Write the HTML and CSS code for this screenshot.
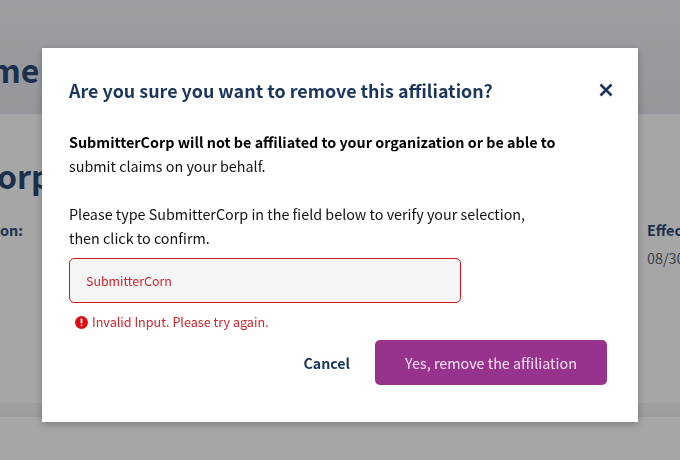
FILE: index.html
```html
<!DOCTYPE html>
<html lang="en">
<head>
    <meta charset="UTF-8">
    <meta name="viewport" content="width=device-width, initial-scale=1.0">
    <title>Remove affiliation</title>
    <link rel="stylesheet" href="styles.css">
</head>
<body>
    <div class="page">
        <header class="page-header">
            <h1 class="page-title">men</h1>
        </header>
        <main class="page-card">
            <h2 class="card-title">orp</h2>
            <div class="card-fields">
                <div class="field-name">on:</div>
                <div class="field-date">
                    <div class="field-name">Effec</div>
                    <div class="field-value">08/30</div>
                </div>
            </div>
        </main>
        <div class="card-edge"></div>
    </div>

    <div class="overlay">
        <div class="dialog">
            <div class="dialog-head">
                <h2 class="dialog-title">Are you sure you want to remove this affiliation?</h2>
                <button class="close-btn" aria-label="Close">
                    <svg width="14" height="14" viewBox="0 0 14 14">
                        <path d="M1.5 1.5L12.5 12.5M12.5 1.5L1.5 12.5" stroke="#1b365d" stroke-width="2.6" fill="none"/>
                    </svg>
                </button>
            </div>
            <p class="dialog-text"><strong>SubmitterCorp will not be affiliated to your organization or be able to</strong><br>submit claims on your behalf.</p>
            <p class="dialog-text">Please type SubmitterCorp in the field below to verify your selection,<br>then click to confirm.</p>
            <input class="verify-input" type="text" value="SubmitterCorn">
            <div class="error-row">
                <svg width="13" height="13" viewBox="0 0 13 13">
                    <circle cx="6.5" cy="6.5" r="6.5" fill="#e00b12"/>
                    <rect x="5.6" y="2.6" width="1.8" height="4.8" rx="0.6" fill="#fff"/>
                    <rect x="5.6" y="8.4" width="1.8" height="1.8" rx="0.9" fill="#fff"/>
                </svg>
                <span>Invalid Input. Please try again.</span>
            </div>
            <div class="dialog-actions">
                <button class="cancel-btn">Cancel</button>
                <button class="confirm-btn">Yes, remove the affiliation</button>
            </div>
        </div>
    </div>
</body>
</html>
```

FILE: styles.css
```css
html, body {
    height: 100%;
}
body {
    margin: 0;
    overflow: hidden;
    background: #ffffff;
    font-family: "Noto Sans CJK SC", "Noto Sans", sans-serif;
    color: #111111;
}
.page {
    height: 460px;
    display: flex;
    flex-direction: column;
}
.page-header {
    height: 114px;
    background: linear-gradient(#f0f2f9, #e4e7ee);
    overflow: hidden;
}
.page-title {
    margin: 48px 0 0 -10px;
    font-size: 32px;
    line-height: 42px;
    font-weight: 700;
    color: #2a4a78;
}
.page-card {
    height: 289px;
    overflow: hidden;
}
.card-title {
    margin: 40px 0 0 -3px;
    font-size: 32px;
    line-height: 42px;
    font-weight: 700;
    color: #2a4a78;
}
.card-fields {
    display: flex;
    justify-content: space-between;
    margin-top: 22px;
}
.field-name {
    font-size: 14.4px;
    line-height: 24px;
    font-weight: 700;
    color: #2a4a78;
    white-space: nowrap;
}
.field-date {
    width: 33px;
}
.field-value {
    margin-top: 4px;
    font-size: 14.4px;
    line-height: 24px;
    color: #5c6470;
    white-space: nowrap;
}
.card-edge {
    height: 14px;
    background: linear-gradient(#f6f6f6, #f0f0f0);
}

/* modal */
.overlay {
    position: fixed;
    top: 0;
    left: 0;
    right: 0;
    bottom: 0;
    background: rgba(0, 0, 0, 0.35);
    display: flex;
    align-items: flex-start;
    justify-content: center;
    padding-top: 48px;
}
.dialog {
    width: 596px;
    height: 374px;
    box-sizing: border-box;
    padding: 26px 31px 0 27px;
    background: #ffffff;
    box-shadow: 0 2px 8px rgba(0, 0, 0, 0.25);
}
.dialog-head {
    display: flex;
    justify-content: space-between;
    align-items: center;
    height: 32px;
}
.dialog-title {
    margin: 0;
    font-size: 17.9px;
    line-height: 32px;
    font-weight: 700;
    color: #1b365d;
}
.close-btn {
    display: flex;
    padding: 0;
    margin: -1px -6px 0 0;
    border: none;
    background: none;
    cursor: pointer;
}
.dialog-text {
    margin: 24px 0 0;
    font-size: 14.35px;
    line-height: 24px;
}
.dialog-text strong {
    font-weight: 700;
    color: #000000;
}
.verify-input {
    display: block;
    width: 392px;
    height: 45px;
    box-sizing: border-box;
    margin-top: 8px;
    padding: 0 16px;
    border: 1px solid #d3161c;
    border-radius: 5px;
    background: #f4f5f5;
    font-family: inherit;
    font-size: 12.4px;
    color: #d8212a;
    outline: none;
}
.error-row {
    display: flex;
    align-items: center;
    gap: 4px;
    margin-top: 9px;
    padding-left: 6px;
    height: 20px;
    font-size: 12.6px;
    line-height: 20px;
    color: #d8212a;
}
.dialog-actions {
    display: flex;
    justify-content: flex-end;
    align-items: center;
    gap: 25px;
    margin-top: 8px;
}
.cancel-btn {
    padding: 0;
    border: none;
    background: none;
    font-family: inherit;
    font-size: 14.2px;
    font-weight: 700;
    color: #1b365d;
    cursor: pointer;
}
.confirm-btn {
    width: 232px;
    height: 45px;
    border: none;
    border-radius: 5px;
    background: #97338c;
    font-family: inherit;
    font-size: 14.35px;
    color: #f7e3f5;
    cursor: pointer;
}
```
